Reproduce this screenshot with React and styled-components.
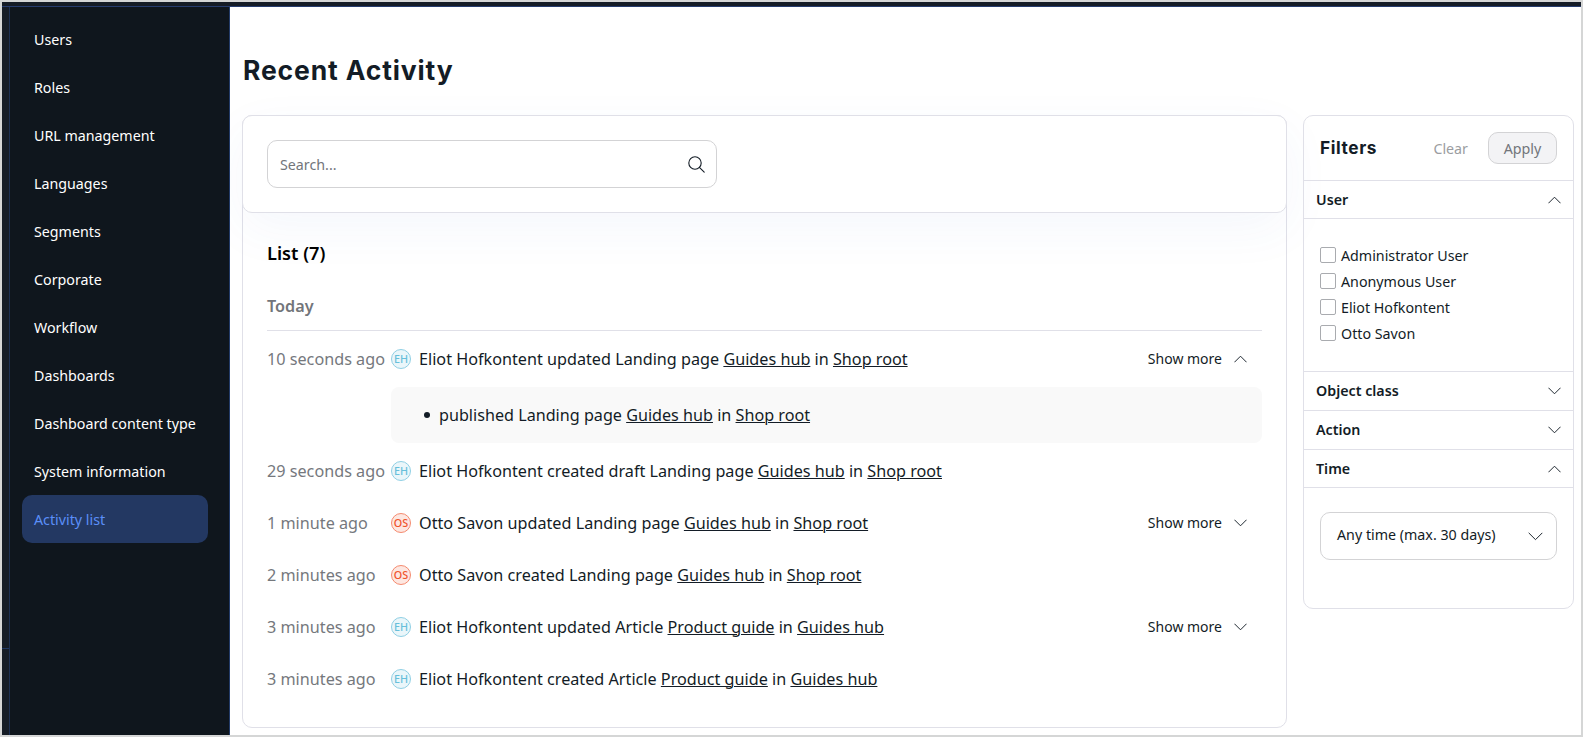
import React from "react";
import styled, { createGlobalStyle, css } from "styled-components";

const line = "#e0e0e8";
const ink = "#131c26";
const heading = css`
  font-family: "Inter", "Noto Sans", sans-serif;
  font-weight: 700;
  color: ${ink};
`;

const GlobalStyle = createGlobalStyle`
  *, *::before, *::after { box-sizing: border-box; }
  body { margin: 0; background: #fff; }
  a { color: inherit; }
`;

const Frame = styled.div`
  display: flex;
  flex-direction: column;
  width: 1583px;
  height: 737px;
  border: 2px solid #d5d6d6;
  overflow: hidden;
  background: #fff;
  color: ${ink};
  font: 400 14.25px/20px "Noto Sans", sans-serif;
`;

const TopBar = styled.header`
  flex: none;
  height: 5px;
  background: #151c26;
  border-bottom: 1px solid #263c6e;
`;

const Body = styled.div`
  flex: 1;
  min-height: 0;
  display: flex;
`;

const Rail = styled.div`
  flex: none;
  width: 8px;
  background: #151c26;
  border-right: 1px solid #1c2f52;
`;

const RailTop = styled.div`
  height: 642px;
  border-bottom: 1px solid #1f3763;
`;

const Sidebar = styled.nav`
  position: relative;
  z-index: 1;
  flex: none;
  width: 220px;
  padding: 8px 21px 0 12px;
  background: #0f161d;
  border-right: 1px solid #223a66;
`;

const NavItem = styled.a`
  display: flex;
  align-items: center;
  height: 48px;
  padding: 1px 12px 0;
  border-radius: 10px;
  font-size: 14.25px;
  white-space: nowrap;
  color: ${(p) => (p.$active ? "#5b8ff9" : "#fff")};
  background: ${(p) => (p.$active ? "#233862" : "transparent")};
`;

const Main = styled.main`
  flex: 1;
  min-width: 0;
  padding: 43px 7px 0 12px;
`;

const Title = styled.h1`
  ${heading}
  margin: 0 0 25px;
  padding-left: 1px;
  font-size: 26.5px;
  line-height: 40px;
  letter-spacing: 0.85px;
`;

const Columns = styled.div`
  display: flex;
  align-items: flex-start;
  gap: 16px;
`;

const Panel = styled.section`
  flex: 1;
  height: 613px;
  border: 1px solid ${line};
  border-radius: 10px;
`;

const SearchCard = styled.div`
  margin: -1px;
  height: 98px;
  padding: 24px;
  border: 1px solid ${line};
  border-radius: 10px;
  box-shadow: 0 16px 50px rgba(60, 100, 200, 0.05);
  background: #fff;
`;

const SearchField = styled.div`
  display: flex;
  align-items: center;
  justify-content: space-between;
  width: 450px;
  height: 48px;
  padding: 0 11px 0 12px;
  border: 1px solid #d3d3d5;
  border-radius: 10px;
  color: #72757a;
`;

const Placeholder = styled.span`
  padding-top: 1px;
`;

const List = styled.div`
  padding: 27px 24px 0;
`;

const ListTitle = styled.h2`
  margin: 0;
  font-size: 18.2px;
  font-weight: 600;
  line-height: 28px;
  color: #000;
`;

const Day = styled.h3`
  margin: 0 0 2px;
  height: 64px;
  padding-top: 25px;
  border-bottom: 1px solid ${line};
  font-size: 16.2px;
  font-weight: 600;
  line-height: 28px;
  color: #72757a;
`;

const Entry = styled.div`
  display: flex;
  align-items: center;
  height: 52px;
  font-size: 16.19px;
`;

const When = styled.span`
  flex: none;
  width: 124px;
  white-space: nowrap;
  color: #75787d;
`;

const Avatar = styled.span`
  flex: none;
  display: flex;
  align-items: center;
  justify-content: center;
  width: 20px;
  height: 20px;
  margin-right: 8px;
  border: 1px solid ${(p) => (p.$orange ? "#f58a6f" : "#8fcfe4")};
  border-radius: 50%;
  background: ${(p) => (p.$orange ? "#fde7e1" : "#eaf6fa")};
  color: ${(p) => (p.$orange ? "#f0532c" : "#68bfda")};
  font-size: 10.8px;
  font-weight: 500;
  line-height: 18px;
`;

const Toggle = styled.span`
  display: flex;
  align-items: center;
  gap: 12px;
  margin-left: auto;
  margin-right: 15px;
  font-size: 14px;
`;

const Details = styled.ul`
  height: 56px;
  margin: 2px 0 2px 124px;
  padding: 0 0 0 33px;
  border-radius: 8px;
  background: #f9f9f9;
  font-size: 16.17px;
  list-style: none;
`;

const DetailItem = styled.li`
  display: flex;
  align-items: center;
  gap: 9px;
  height: 56px;

  &::before {
    content: "";
    width: 6px;
    height: 6px;
    border-radius: 50%;
    background: ${ink};
  }
`;

const Filters = styled.aside`
  flex: none;
  width: 271px;
  height: 494px;
  border: 1px solid ${line};
  border-radius: 10px;
`;

const FiltersHead = styled.div`
  display: flex;
  align-items: center;
  height: 65px;
  padding: 0 16px;
  border-bottom: 1px solid ${line};
`;

const FiltersTitle = styled.h2`
  ${heading}
  flex: 1;
  margin: 0;
  font-size: 17.3px;
  letter-spacing: 0.6px;
`;

const Clear = styled.span`
  margin-right: 20px;
  padding-top: 1px;
  color: #9b9da1;
`;

const Apply = styled.button`
  width: 69px;
  height: 32px;
  padding: 1px 0 0;
  border: 1px solid #d3d3d5;
  border-radius: 10px;
  background: #f3f3f5;
  color: #72757a;
  font: inherit;
`;

const SectionHead = styled.div`
  display: flex;
  align-items: center;
  justify-content: space-between;
  height: ${(p) => p.$h || 39}px;
  padding: 0 12px;
  border-bottom: 1px solid ${line};
  font-weight: 600;
`;

const Checks = styled.div`
  height: 153px;
  padding: 24px 16px 0;
  border-bottom: 1px solid ${line};
`;

const Check = styled.label`
  display: flex;
  align-items: center;
  gap: 5px;
  height: 26px;
`;

const Box = styled.span`
  width: 16px;
  height: 16px;
  margin-bottom: 2px;
  border: 1px solid #a9abaf;
  border-radius: 2px;
  background: #fff;
`;

const Select = styled.div`
  display: flex;
  align-items: center;
  justify-content: space-between;
  height: 48px;
  margin: 24px 16px 0;
  padding: 0 13px 0 16px;
  border: 1px solid #d3d3d5;
  border-radius: 10px;
`;

const SelectValue = styled.span`
  padding-bottom: 2px;
`;

const Chevron = ({ up, large }) => (
  <svg width={large ? 15 : 13} height={large ? 9 : 8} viewBox="0 0 13 8" fill="none" stroke={ink} strokeWidth={large ? 0.85 : 0.95} strokeLinecap="round" strokeLinejoin="round">
    <path d={up ? "M0.7 7 6.5 1.2 12.3 7" : "M0.7 1 6.5 6.8 12.3 1"} />
  </svg>
);

const Magnifier = () => (
  <svg width="17" height="17" viewBox="0 0 17 17" fill="none" stroke={ink} strokeWidth="1.1" strokeLinecap="round">
    <circle cx="7" cy="7" r="6.2" />
    <path d="M11.4 11.4 16.2 16.2" />
  </svg>
);

const nav = ["Users", "Roles", "URL management", "Languages", "Segments", "Corporate", "Workflow", "Dashboards", "Dashboard content type", "System information", "Activity list"];

const entries = [
  { when: "10 seconds ago", who: "EH", text: "Eliot Hofkontent updated Landing page", item: "Guides hub", parent: "Shop root", toggle: "up" },
  { when: "29 seconds ago", who: "EH", text: "Eliot Hofkontent created draft Landing page", item: "Guides hub", parent: "Shop root" },
  { when: "1 minute ago", who: "OS", text: "Otto Savon updated Landing page", item: "Guides hub", parent: "Shop root", toggle: "down" },
  { when: "2 minutes ago", who: "OS", text: "Otto Savon created Landing page", item: "Guides hub", parent: "Shop root" },
  { when: "3 minutes ago", who: "EH", text: "Eliot Hofkontent updated Article", item: "Product guide", parent: "Guides hub", toggle: "down" },
  { when: "3 minutes ago", who: "EH", text: "Eliot Hofkontent created Article", item: "Product guide", parent: "Guides hub" },
];

const users = ["Administrator User", "Anonymous User", "Eliot Hofkontent", "Otto Savon"];

const Sentence = styled.span`
  white-space: nowrap;

  a {
    text-decoration: underline;
    text-decoration-thickness: 1.3px;
    text-decoration-skip-ink: auto;
  }
`;

const Event = ({ text, item, parent }) => (
  <Sentence>
    {text} <a href="#item">{item}</a> in <a href="#parent">{parent}</a>
  </Sentence>
);

export default function App() {
  return (
    <Frame>
      <GlobalStyle />
      <TopBar />
      <Body>
        <Rail><RailTop /></Rail>
        <Sidebar>
          {nav.map((n) => (
            <NavItem key={n} $active={n === "Activity list"}>{n}</NavItem>
          ))}
        </Sidebar>
        <Main>
          <Title>Recent Activity</Title>
          <Columns>
            <Panel>
              <SearchCard>
                <SearchField>
                  <Placeholder>Search...</Placeholder>
                  <Magnifier />
                </SearchField>
              </SearchCard>
              <List>
                <ListTitle>List (7)</ListTitle>
                <Day>Today</Day>
                {entries.map((e, i) => (
                  <React.Fragment key={i}>
                    <Entry>
                      <When>{e.when}</When>
                      <Avatar $orange={e.who === "OS"}>{e.who}</Avatar>
                      <Event {...e} />
                      {e.toggle && (
                        <Toggle>
                          Show more
                          <Chevron up={e.toggle === "up"} />
                        </Toggle>
                      )}
                    </Entry>
                    {e.toggle === "up" && (
                      <Details>
                        <DetailItem>
                          <Event text="published Landing page" item="Guides hub" parent="Shop root" />
                        </DetailItem>
                      </Details>
                    )}
                  </React.Fragment>
                ))}
              </List>
            </Panel>
            <Filters>
              <FiltersHead>
                <FiltersTitle>Filters</FiltersTitle>
                <Clear>Clear</Clear>
                <Apply>Apply</Apply>
              </FiltersHead>
              <SectionHead $h={38}>User<Chevron up /></SectionHead>
              <Checks>
                {users.map((u) => (
                  <Check key={u}><Box />{u}</Check>
                ))}
              </Checks>
              <SectionHead>Object class<Chevron /></SectionHead>
              <SectionHead>Action<Chevron /></SectionHead>
              <SectionHead $h={38}>Time<Chevron up /></SectionHead>
              <Select><SelectValue>Any time (max. 30 days)</SelectValue><Chevron large /></Select>
            </Filters>
          </Columns>
        </Main>
      </Body>
    </Frame>
  );
}
